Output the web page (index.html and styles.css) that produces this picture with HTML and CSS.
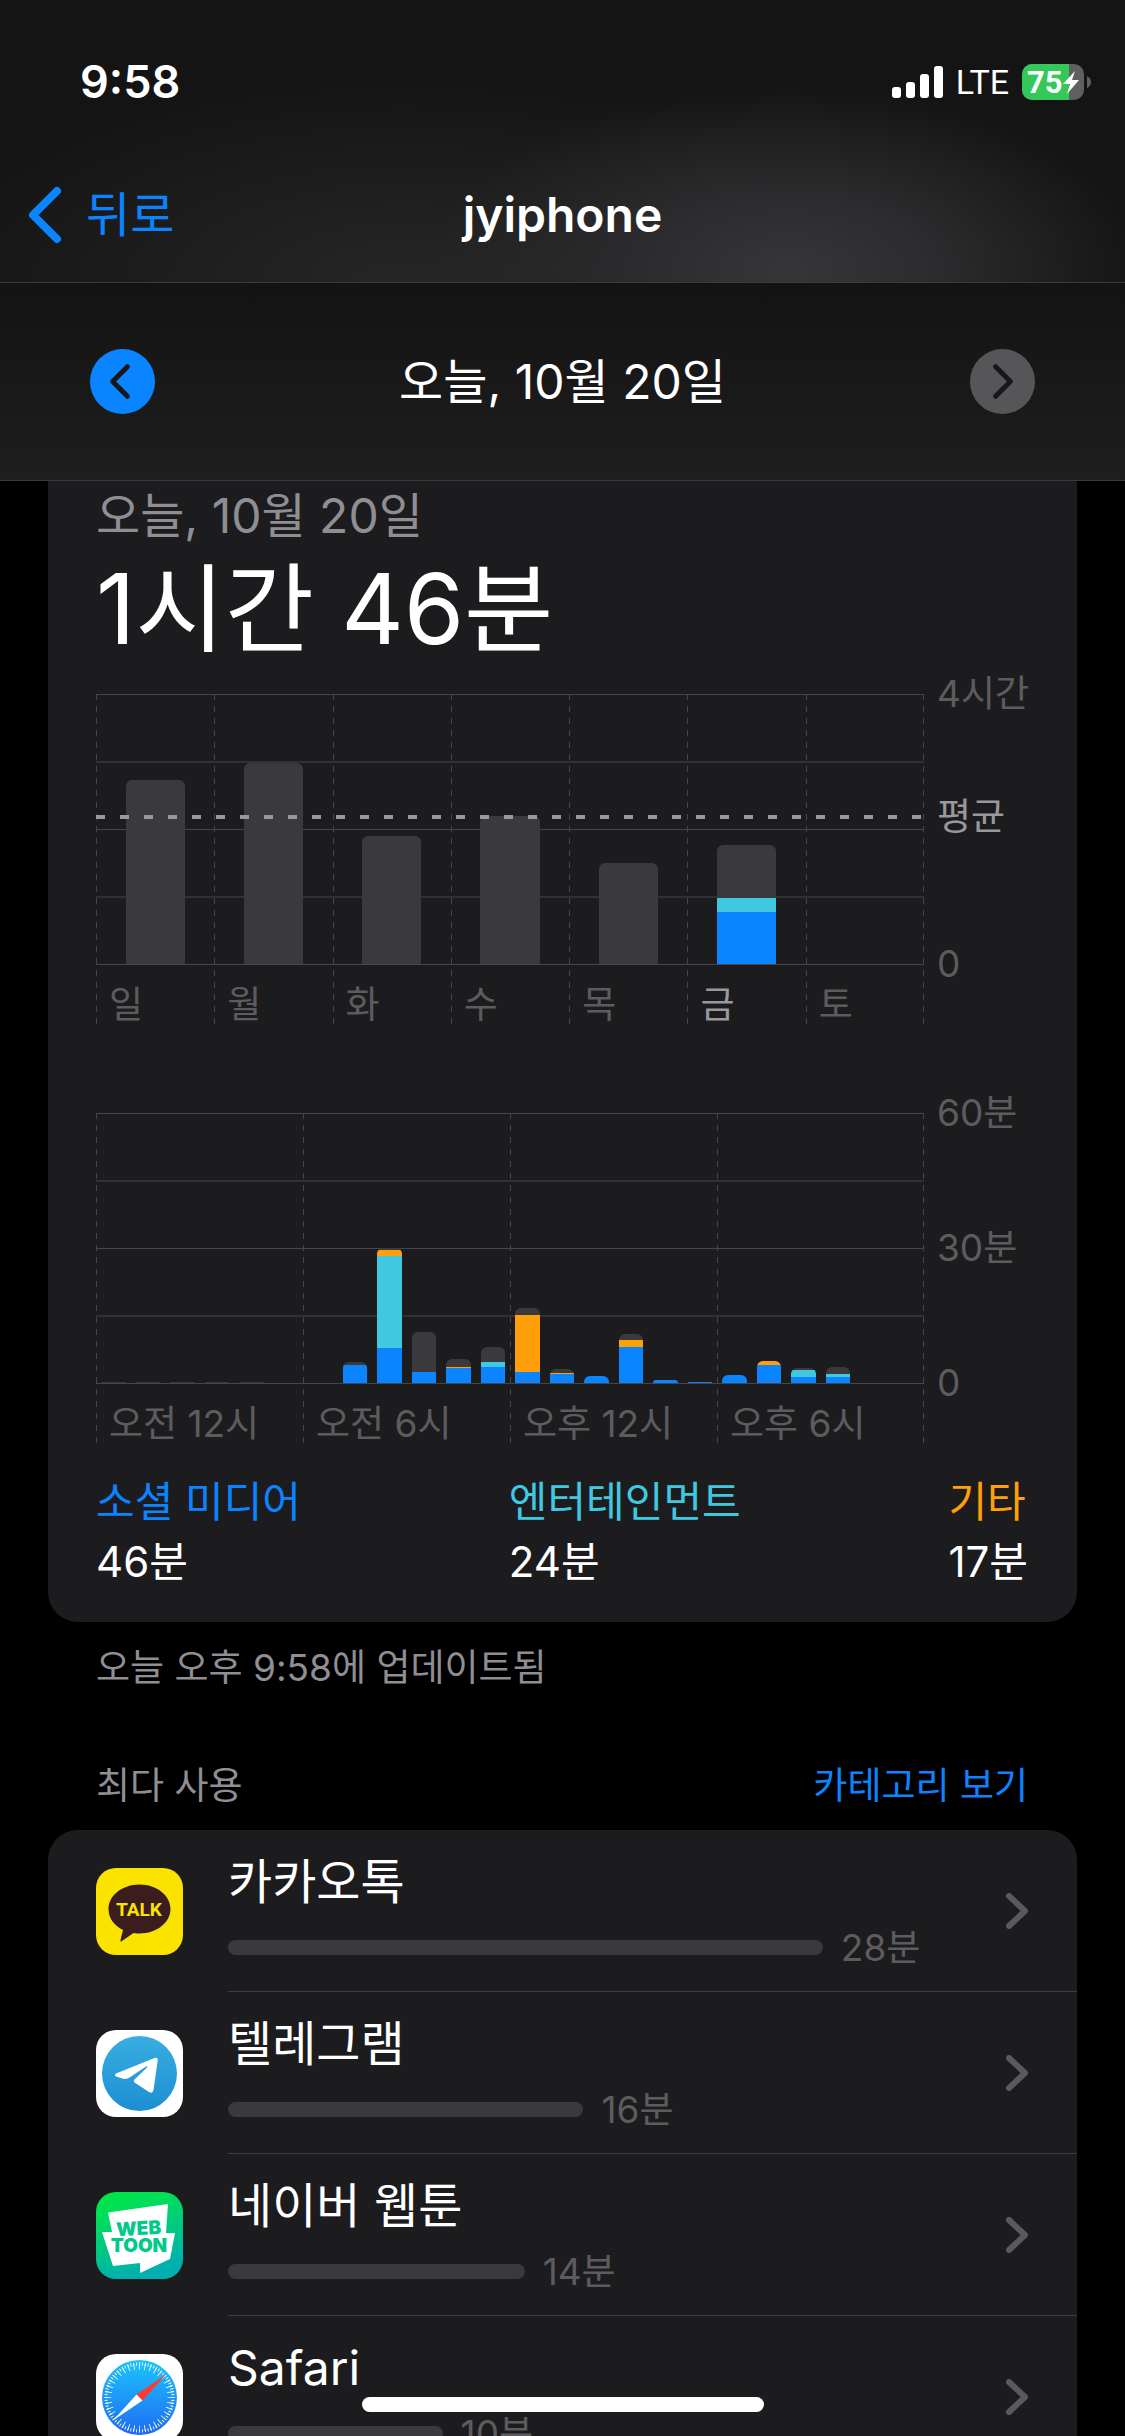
FILE: index.html
```html
<!DOCTYPE html>
<html lang="ko">
<head>
    <meta charset="UTF-8">
    <meta name="viewport" content="width=device-width, initial-scale=1.0">
    <title>스크린 타임</title>
    <link rel="stylesheet" href="styles.css">
</head>
<body>
    <div class="screen">
        <header class="top">
            <div class="status-bar">
                <time class="clock">9:58</time>
                <div class="status-icons">
                    <svg class="signal" viewBox="0 0 51 32" aria-hidden="true">
                        <rect x="0" y="21" width="9" height="11" rx="3"/>
                        <rect x="14" y="16" width="9" height="16" rx="3"/>
                        <rect x="28" y="8" width="9" height="24" rx="3"/>
                        <rect x="42" y="0" width="9" height="32" rx="3"/>
                    </svg>
                    <span class="network">LTE</span>
                    <svg class="battery" viewBox="0 0 70 36" role="img" aria-label="배터리 75%">
                        <clipPath id="batteryClip"><rect width="62" height="36" rx="10"/></clipPath>
                        <g clip-path="url(#batteryClip)">
                            <rect width="62" height="36" fill="#5f5f60"/>
                            <rect width="47" height="36" fill="#34c759"/>
                        </g>
                        <path d="M65 12q4 2 4 6t-4 6z" fill="#5f5f60"/>
                        <text x="5" y="29" class="battery-text">75</text>
                        <path d="M53 7 41 20h7l-3 10 12-14h-7z" fill="#fff"/>
                    </svg>
                </div>
            </div>
            <nav class="nav-bar">
                <a class="back" href="#">
                    <svg viewBox="0 0 34 58" aria-hidden="true"><path d="M29 5 5 29l24 24"/></svg>
                    뒤로
                </a>
                <h1>jyiphone</h1>
            </nav>
        </header>

        <div class="date-bar">
            <button class="round" type="button" aria-label="이전 날">
                <svg viewBox="0 0 66 66" aria-hidden="true"><path d="M38 18 23 33l15 15"/></svg>
            </button>
            <span>오늘, 10월 20일</span>
            <button class="round next" type="button" aria-label="다음 날" disabled>
                <svg viewBox="0 0 66 66" aria-hidden="true"><path d="m26 18 15 15-15 15"/></svg>
            </button>
        </div>

        <main>
            <section class="card usage">
                <p class="usage-date">오늘, 10월 20일</p>
                <p class="usage-total">1시간 46분</p>

                <div class="chart weekly">
                    <div class="plot" id="weeklyPlot">
                        <div class="average"></div>
                    </div>
                    <div class="axis">
                        <span>4시간</span>
                        <span class="strong">평균</span>
                        <span>0</span>
                    </div>
                </div>

                <div class="chart daily">
                    <div class="plot" id="dailyPlot"></div>
                    <div class="axis">
                        <span>60분</span>
                        <span>30분</span>
                        <span>0</span>
                    </div>
                </div>

                <dl class="legend">
                    <div>
                        <dt class="social">소셜 미디어</dt>
                        <dd>46분</dd>
                    </div>
                    <div>
                        <dt class="fun">엔터테인먼트</dt>
                        <dd>24분</dd>
                    </div>
                    <div>
                        <dt class="etc">기타</dt>
                        <dd>17분</dd>
                    </div>
                </dl>
            </section>
            <p class="updated">오늘 오후 9:58에 업데이트됨</p>

            <div class="section-head">
                <h2>최다 사용</h2>
                <a href="#">카테고리 보기</a>
            </div>
            <ul class="card apps">
                <li>
                    <a href="#">
                        <svg class="app-icon" viewBox="0 0 87 87" aria-hidden="true">
                            <rect width="87" height="87" rx="20" fill="#fbe300"/>
                            <path d="M43.500 16.500c17.200 0 31 11 31 24.500s-13.800 24.500-31 24.500q-3 0-6-.5L26 73q-2 1.500-1.500-1l2.500-10C18 57.500 12.500 50 12.500 41c0-13.500 13.800-24.500 31-24.500z" fill="#3b1d20"/>
                            <text x="43" y="48" class="talk">TALK</text>
                        </svg>
                        <div class="app-body">
                            <div class="app-info">
                                <span class="app-name">카카오톡</span>
                                <span class="app-time"><i style="width: 79%"></i>28분</span>
                            </div>
                            <svg class="chevron" viewBox="0 0 22 36" aria-hidden="true"><path d="m3 3 16 15L3 33"/></svg>
                        </div>
                    </a>
                </li>
                <li>
                    <a href="#">
                        <svg class="app-icon" viewBox="0 0 87 87" aria-hidden="true">
                            <linearGradient id="telegramBlue" x2="0" y2="1">
                                <stop stop-color="#38aee0"/>
                                <stop offset="1" stop-color="#1c8fd3"/>
                            </linearGradient>
                            <rect width="87" height="87" rx="20" fill="#fff"/>
                            <circle cx="43.500" cy="43.500" r="37.500" fill="url(#telegramBlue)"/>
                            <path d="M20 43.500 58.500 28q3.500-1 3.200 2.500L57.500 60q-.8 4-4.500 2L38.500 52.500q-1.500-1.500 0-3L51 37.500q1-1.800-1-1L33.500 47.500q-3 2-6 1.200L20 46.500q-2-1.500 0-3z" fill="#fff"/>
                        </svg>
                        <div class="app-body">
                            <div class="app-info">
                                <span class="app-name">텔레그램</span>
                                <span class="app-time"><i style="width: 47.200%"></i>16분</span>
                            </div>
                            <svg class="chevron" viewBox="0 0 22 36" aria-hidden="true"><path d="m3 3 16 15L3 33"/></svg>
                        </div>
                    </a>
                </li>
                <li>
                    <a href="#">
                        <svg class="app-icon" viewBox="0 0 87 87" aria-hidden="true">
                            <linearGradient id="webtoonGreen" x2=".3" y2="1">
                                <stop stop-color="#00e640"/>
                                <stop offset=".25" stop-color="#00df58"/>
                                <stop offset="1" stop-color="#00b0ae"/>
                            </linearGradient>
                            <rect width="87" height="87" rx="20" fill="url(#webtoonGreen)"/>
                            <path d="M12 20.500 72 12l-2 29h9l-5 26-30 14v-10l-27 3L6 40h10z" fill="#fff"/>
                            <g class="webtoon" fill="#00c98a">
                                <text x="43" y="43" transform="rotate(-3 43 43)">WEB</text>
                                <text x="43" y="60">TOON</text>
                            </g>
                        </svg>
                        <div class="app-body">
                            <div class="app-info">
                                <span class="app-name">네이버 웹툰</span>
                                <span class="app-time"><i style="width: 39.400%"></i>14분</span>
                            </div>
                            <svg class="chevron" viewBox="0 0 22 36" aria-hidden="true"><path d="m3 3 16 15L3 33"/></svg>
                        </div>
                    </a>
                </li>
                <li>
                    <a href="#">
                        <svg class="app-icon" viewBox="0 0 87 87" aria-hidden="true">
                            <linearGradient id="safariBlue" x2="0" y2="1">
                                <stop stop-color="#1cc5fb"/>
                                <stop offset="1" stop-color="#1f6bf2"/>
                            </linearGradient>
                            <rect width="87" height="87" rx="20" fill="#fff"/>
                            <circle cx="43.500" cy="43.500" r="37.500" fill="url(#safariBlue)"/>
                            <g fill="none" stroke="#fff">
                                <circle cx="43.500" cy="43.500" r="33.500" stroke-width="3" pathLength="360" stroke-dasharray="1.500 3.500" stroke-dashoffset=".75"/>
                                <circle cx="43.500" cy="43.500" r="31.500" stroke-width="7" pathLength="360" stroke-dasharray="1.500 8.500" stroke-dashoffset=".75"/>
                            </g>
                            <path d="M70 20.500 40.500 40.500l6 6z" fill="#ff3b30"/>
                            <path d="M17 66.500 40.500 40.500l6 6z" fill="#fff"/>
                        </svg>
                        <div class="app-body">
                            <div class="app-info">
                                <span class="app-name">Safari</span>
                                <span class="app-time"><i style="width: 28.500%"></i>10분</span>
                            </div>
                            <svg class="chevron" viewBox="0 0 22 36" aria-hidden="true"><path d="m3 3 16 15L3 33"/></svg>
                        </div>
                    </a>
                </li>
            </ul>
        </main>
        <div class="home-indicator"></div>
    </div>

    <script src="script.js"></script>
</body>
</html>
```

FILE: styles.css
```css
:root {
    --blue: #0a84ff;
    --cyan: #40c8e0;
    --orange: #ff9f0a;
    --bar: #3a3a3c;
    --line: #464648;
    --dim: #5c5c5e;
    --dash: repeating-linear-gradient(#464648 0 6px, transparent 6px 12px);
}
* { box-sizing: border-box; margin: 0; padding: 0; }
body {
    background-color: #000;
    color: #fff;
    font-family: Inter, "Noto Sans CJK KR", sans-serif;
    font-size: 37px;
    line-height: 48px;
}
a { color: var(--blue); text-decoration: none; }
ul { list-style: none; }
svg { display: block; flex: none; }

.screen {
    height: 100vh;
    display: flex;
    flex-direction: column;
    overflow: hidden;
}

/* 상단 */
.top {
    border-bottom: 1px solid #3a3a3c;
    background:
        radial-gradient(ellipse 32% 66% at 70% 96%, #363638, #2c2c2e 40%, transparent),
        radial-gradient(ellipse 45% 75% at 36% 100%, #262627, transparent),
        #141414;
}
.status-bar {
    display: flex;
    justify-content: space-between;
    align-items: center;
    padding: 50px 33px 34px 80px;
    line-height: 64px;
}
.clock { font-size: 45px; font-weight: 600; }
.status-icons { display: flex; align-items: center; gap: 13px; }
.signal { width: 51px; height: 32px; fill: #fff; }
.network { font-family: Roboto, sans-serif; font-size: 34px; }
.battery { width: 70px; height: 36px; }
.battery-text { font: 700 31px Roboto, sans-serif; fill: #fff; }

.nav-bar {
    display: grid;
    grid-template-columns: 1fr auto 1fr;
    align-items: center;
    height: 134px;
    padding: 0 28px;
}
.nav-bar h1 { font-size: 48px; font-weight: 600; }
.back { display: flex; align-items: center; gap: 24px; font-size: 48px; }
.back svg { width: 34px; height: 58px; }
.back path { fill: none; stroke: var(--blue); stroke-width: 8; stroke-linecap: round; stroke-linejoin: round; }

.date-bar {
    display: flex;
    justify-content: space-between;
    align-items: center;
    padding: 66px 90px;
    border-bottom: 1px solid #3a3a3c;
    background: linear-gradient(#131313, #1e1e1e);
    font-size: 48px;
}
.round {
    width: 65px;
    height: 65px;
    border: 0;
    border-radius: 50%;
    background-color: var(--blue);
}
.round.next { background-color: #565658; }
.round svg { width: 65px; height: 65px; }
.round path { fill: none; stroke: #17171a; stroke-width: 5; stroke-linecap: round; stroke-linejoin: round; }

/* 사용 시간 카드 */
main { flex: 1; overflow: hidden; padding: 0 48px; }
.card { background-color: #1c1c1e; border-radius: 30px; }
.usage { padding: 5px 49px 30px 48px; border-radius: 0 0 30px 30px; }
.usage-date { color: #8e8e93; font-size: 48px; line-height: 60px; }
.usage-total { font-size: 97px; line-height: 126px; }

.chart { display: grid; grid-template-columns: 1fr 104px; color: var(--dim); }
.weekly { margin-top: 22px; }
.daily { margin-top: 88px; }
.plot {
    position: relative;
    display: flex;
    background: var(--dash) right / 1px 100% no-repeat;
}
.col { flex: 1; background: var(--dash) left / 1px 100% no-repeat; }
.bars {
    display: flex;
    align-items: flex-end;
    height: 271px;
    border-bottom: 1px solid var(--line);
    background: linear-gradient(var(--line) 1px, transparent 1px) 0 0 / 100% 25%;
}
.slot { flex: 1; height: 100%; display: flex; align-items: flex-end; padding: 0 5px; }
.weekly .slot { padding: 0 25%; }
.bar {
    width: 100%;
    display: flex;
    flex-direction: column;
    overflow: hidden;
    border-radius: 6px 6px 0 0;
    background-color: var(--bar);
}
.bar i { display: block; }
.bar .social { background-color: var(--blue); }
.bar .fun { background-color: var(--cyan); }
.bar .etc { background-color: var(--orange); }
.tick { display: block; height: 60px; padding-left: 13px; line-height: 80px; }
.strong { color: #98989d; }
.average {
    position: absolute;
    top: 121px;
    left: 0;
    right: 0;
    height: 4px;
    background: repeating-linear-gradient(90deg, #98989d 0 9px, transparent 9px 24px);
}
.axis { display: grid; height: 270px; padding-left: 13px; line-height: 0; white-space: nowrap; }
.weekly .axis { grid-template-rows: 123fr 147fr 0; }
.daily .axis { grid-template-rows: 1fr 1fr 0; }

.legend {
    display: flex;
    justify-content: space-between;
    margin-top: 28px;
    font-size: 42px;
    line-height: 60px;
}
dt.social { color: var(--blue); }
dt.fun { color: var(--cyan); }
dt.etc { color: var(--orange); }

.updated { margin: 22px 48px 70px; color: #8e8e93; }
.section-head {
    display: flex;
    justify-content: space-between;
    padding: 0 49px 20px 48px;
}
.section-head h2 { color: #8e8e93; font-size: 37px; font-weight: 400; }

/* 앱 목록 */
.apps a { display: flex; align-items: center; gap: 45px; padding-left: 48px; color: #fff; }
.app-icon { width: 87px; height: 87px; }
.app-body {
    flex: 1;
    display: flex;
    justify-content: space-between;
    align-items: center;
    height: 162px;
    padding-right: 49px;
    border-bottom: 1px solid #3d3d40;
}
.app-info { flex: 1; margin-right: 25px; padding-top: 8px; }
.app-name { display: block; padding-bottom: 6px; font-size: 48px; line-height: 60px; }
.app-time { display: flex; align-items: center; gap: 18px; color: var(--dim); line-height: 60px; }
.app-time i { height: 15px; border-radius: 8px; background-color: var(--bar); }
.chevron { width: 22px; height: 36px; }
.chevron path { fill: none; stroke: #5a5a5e; stroke-width: 6; stroke-linecap: round; stroke-linejoin: round; }
.talk { font: 700 19px Roboto, sans-serif; fill: #fbe300; text-anchor: middle; }
.webtoon { font: 900 19px Inter, sans-serif; text-anchor: middle; }

.home-indicator {
    position: fixed;
    bottom: 24px;
    left: 50%;
    width: 402px;
    height: 15px;
    margin-left: -201px;
    border-radius: 8px;
    background-color: #fff;
}
```

FILE: script.js
```js
// 요일별 사용 시간 (분), 최대 4시간
const weekly = [
    { label: '일', bars: [{ rest: 164 }] },
    { label: '월', bars: [{ rest: 179 }] },
    { label: '화', bars: [{ rest: 114 }] },
    { label: '수', bars: [{ rest: 132 }] },
    { label: '목', bars: [{ rest: 90 }] },
    { label: '금', bars: [{ rest: 47, fun: 13, social: 46 }], today: true },
    { label: '토', bars: [{}] }
];

// 시간대별 사용 시간 (초), 최대 60분
const daily = [
    { label: '오전 12시', bars: [{ rest: 14 }, { rest: 14 }, { rest: 14 }, { rest: 14 }, { rest: 14 }, {}] },
    { label: '오전 6시', bars: [
        {},
        { rest: 40, social: 240 },
        { rest: 20, etc: 93, fun: 1227, social: 460 },
        { rest: 533, social: 147 },
        { rest: 107, etc: 14, social: 200 },
        { rest: 200, fun: 67, social: 213 }
    ] },
    { label: '오후 12시', bars: [
        { rest: 93, etc: 760, social: 147 },
        { rest: 53, etc: 14, social: 120 },
        { social: 93 },
        { rest: 80, etc: 93, social: 480 },
        { social: 40 },
        { social: 14 }
    ] },
    { label: '오후 6시', bars: [
        { social: 107 },
        { etc: 53, social: 240 },
        { rest: 27, fun: 93, social: 80 },
        { rest: 93, fun: 40, social: 80 },
        {},
        {}
    ] }
];

function drawChart(plot, columns, max) {
    columns.forEach(column => {
        const bars = column.bars.map(bar => {
            const total = Object.values(bar).reduce((a, b) => a + b, 0);
            const parts = Object.entries(bar)
                .map(([name, value]) => `<i class="${name}" style="height: ${value / total * 100}%"></i>`)
                .join('');
            return `<div class="slot"><div class="bar" style="height: ${total / max * 100}%">${parts}</div></div>`;
        }).join('');
        const col = document.createElement('div');
        col.className = 'col';
        col.innerHTML = `<div class="bars">${bars}</div><span class="tick ${column.today ? 'strong' : ''}">${column.label}</span>`;
        plot.append(col);
    });
}

drawChart(document.getElementById('weeklyPlot'), weekly, 240);
drawChart(document.getElementById('dailyPlot'), daily, 3600);
```
